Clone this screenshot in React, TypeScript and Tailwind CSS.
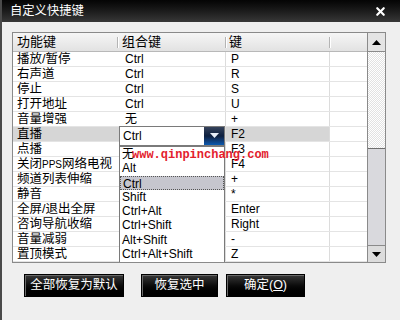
import { X } from "lucide-react";

type Row = { name: string; combo: string; key: string; selected?: boolean };

const rows: Row[] = [
  { name: "播放/暂停", combo: "Ctrl", key: "P" },
  { name: "右声道", combo: "Ctrl", key: "R" },
  { name: "停止", combo: "Ctrl", key: "S" },
  { name: "打开地址", combo: "Ctrl", key: "U" },
  { name: "音量增强", combo: "无", key: "+" },
  { name: "直播", combo: "", key: "F2", selected: true },
  { name: "点播", combo: "", key: "F3" },
  { name: "关闭PPS网络电视", combo: "", key: "F4" },
  { name: "频道列表伸缩", combo: "", key: "+" },
  { name: "静音", combo: "", key: "*" },
  { name: "全屏/退出全屏", combo: "", key: "Enter" },
  { name: "咨询导航收缩", combo: "", key: "Right" },
  { name: "音量减弱", combo: "", key: "-" },
  { name: "置顶模式", combo: "", key: "Z" },
];

const options = ["无", "Alt", "Ctrl", "Shift", "Ctrl+Alt", "Ctrl+Shift", "Alt+Shift", "Ctrl+Alt+Shift"];

// latin runs in the first column are drawn a bit narrower, like the old bitmap font
function Name({ text }: { text: string }) {
  const parts = text.split(/([A-Za-z]+)/);
  return (
    <>
      {parts.map((p, i) =>
        /^[A-Za-z]+$/.test(p) ? (
          <span key={i} className="text-[10px]">{p}</span>
        ) : (
          <span key={i}>{p}</span>
        )
      )}
    </>
  );
}

function HeaderSep() {
  return <span className="absolute left-0 top-[4px] h-[11px] w-[2px] border-l border-[#b4b4b4] bg-white" />;
}

function BlackButton({ children, width }: { children: React.ReactNode; width: string }) {
  return (
    <button
      className={`${width} h-[23px] flex items-center justify-center border border-black bg-gradient-to-b from-[#3a3a3a] via-[#0c0c0c] to-black text-white text-[12.5px] leading-none shadow-[inset_1px_1px_0_#6a6a6a]`}
    >
      {children}
    </button>
  );
}

export default function App() {
  return (
    <div className="relative w-[400px] h-[320px] overflow-hidden bg-[#efefef] border-l-2 border-[#4a4a4a] font-['Liberation_Sans','Noto_Sans_CJK_SC',sans-serif] text-black">
      {/* Title bar */}
      <div className="h-[22px] flex items-center justify-between pl-[8px] pr-[13px] bg-gradient-to-b from-[#050505] via-[#1c1c1c] to-[#383838]">
        <span className="text-white text-[12.3px] leading-none">自定义快捷键</span>
        <X size={13} strokeWidth={4} className="text-white" />
      </div>

      {/* Table */}
      <div className="pt-[10px] pl-[10px]">
        <div className="relative w-[374px] h-[231px] flex border border-[#8a8a8a] bg-white">
          <div className="w-[354px] flex flex-col">
            <div className="h-[19px] grid grid-cols-[104px_108px_104px_38px] bg-gradient-to-b from-[#f6f6f6] to-[#e2e2e2] border-b border-[#b8b8b8] text-[13px] leading-[18px]">
              <div className="pl-[4px]">功能键</div>
              <div className="relative pl-[5px]"><HeaderSep />组合键</div>
              <div className="relative pl-[4px]"><HeaderSep />键</div>
              <div className="relative"><HeaderSep /></div>
            </div>
            {rows.map((r) => (
              <div
                key={r.name}
                className="h-[15px] grid grid-cols-[104px_108px_104px_38px] border-b border-[#e4e4e4] leading-[14px]"
              >
                <div className={`pl-[4px] text-[12.5px] whitespace-nowrap ${r.selected ? "bg-[#d6d6d6]" : ""}`}>
                  <Name text={r.name} />
                </div>
                <div className={`pl-[8px] text-[12px] ${r.selected ? "bg-[#d6d6d6]" : ""}`}>{r.combo}</div>
                <div className={`pl-[5px] text-[12px] border-l border-[#dcdcdc] ${r.selected ? "bg-[#d6d6d6]" : ""}`}>{r.key}</div>
                <div className="border-l border-[#dcdcdc]" />
              </div>
            ))}
          </div>

          {/* Scrollbar */}
          <div className="w-[18px] flex flex-col border-l border-[#8a8a8a]">
            <div className="h-[19px] flex items-center justify-center bg-[#e4e4e4] border-b border-[#8a8a8a]">
              <svg width="9" height="5" viewBox="0 0 9 5"><path d="M4.5 0 9 5H0z" fill="#000" /></svg>
            </div>
            <div className="h-[96px] bg-[repeating-conic-gradient(#e2e2e2_0%_25%,#ffffff_0%_50%)] bg-[length:2px_2px]" />
            <div className="h-[97px] bg-[#d9d9dd] border-t border-[#6e6e6e]" />
            <div className="flex-1 flex items-center justify-center bg-[#dcdcdc] border-t border-[#8a8a8a]">
              <svg width="9" height="5" viewBox="0 0 9 5"><path d="M0 0h9L4.5 5z" fill="#000" /></svg>
            </div>
          </div>

          {/* Open combobox */}
          <div className="absolute left-[106px] top-[93px] w-[106px] h-[20px] flex items-center bg-white border border-[#7a7a7a]">
            <span className="pl-[3px] text-[12px] leading-none flex-1">Ctrl</span>
            <div className="w-[20px] h-full flex items-start justify-center pt-[6px] bg-gradient-to-b from-[#35425a] via-[#0d1f3f] to-[#0a5ab0]">
              <svg width="9" height="5" viewBox="0 0 9 5"><path d="M0 0h9L4.5 5z" fill="#e8eef8" /></svg>
            </div>
          </div>
          <div className="absolute left-[106px] top-[113px] bottom-0 w-[106px] flex flex-col bg-white border-x border-t border-[#7a7a7a]">
            {options.map((o) => (
              <div
                key={o}
                className={`h-[14.25px] pl-[2px] text-[12px] leading-[14px] whitespace-nowrap ${o === "Ctrl" ? "bg-[#c6c6ce] border border-dotted border-[#555]" : ""}`}
              >
                {o}
              </div>
            ))}
          </div>
        </div>
      </div>

      {/* Buttons */}
      <div className="flex gap-[8px] pl-[22px] mt-[11px]">
        <BlackButton width="w-[100px]">全部恢复为默认</BlackButton>
        <div className="w-px" />
        <BlackButton width="w-[77px]">恢复选中</BlackButton>
        <BlackButton width="w-[79px]">
          确定(<span className="underline">O</span>)
        </BlackButton>
      </div>

      {/* Watermark */}
      <div className="absolute left-[130px] top-[149px] text-[#e3202c] text-[12px] font-bold font-['Liberation_Mono',monospace] leading-none">
        www.qinpinchang.com
      </div>
    </div>
  );
}
